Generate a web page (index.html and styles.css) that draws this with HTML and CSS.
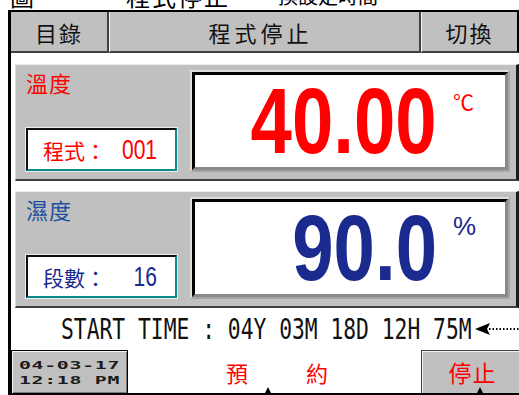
FILE: index.html
```html
<!DOCTYPE html>
<html lang="zh-Hant">
<head>
<meta charset="utf-8">
<link rel="stylesheet" href="styles.css">
</head>
<body>
<div class="caption">
  <div class="cap-line"><span class="cap1">圖</span><span class="cap2">程式停止</span><span class="cap3">換設定時間</span></div>
</div>
<div class="screen">
  <div class="header">
    <div class="hbtn b1">目錄</div>
    <div class="hbtn b2">程式停止</div>
    <div class="hbtn b3">切換</div>
  </div>
  <div class="panels">
    <div class="panel">
      <div class="side">
        <div class="label red">溫度</div>
        <div class="tag red"><span class="tag-k">程式：</span><span class="tag-v">001</span></div>
      </div>
      <div class="valbox"><div class="valinner red"><span class="num">40.00</span><span class="unit cel">℃</span></div></div>
    </div>
    <div class="panel">
      <div class="side">
        <div class="label blue">濕度</div>
        <div class="tag navy"><span class="tag-k">段數：</span><span class="tag-v">16</span></div>
      </div>
      <div class="valbox"><div class="valinner navy"><span class="num">90.0</span><span class="unit pct">%</span></div></div>
    </div>
  </div>
  <div class="start">
    <span class="start-text">START TIME : 04Y 03M 18D 12H 75M</span>
    <svg class="arrow" width="44" height="14" viewBox="0 0 44 14"><polygon points="0,7 15,1 12,7 15,13" fill="#000"/><line x1="14" y1="7" x2="44" y2="7" stroke="#000" stroke-width="2" stroke-dasharray="1.5 2"/></svg>
  </div>
  <div class="bottom">
    <div class="date"><div class="dline">04-03-17</div><div class="dline">12:18 PM</div></div>
    <div class="reserve"><span>預</span><span>約</span></div>
    <div class="stop">停止</div>
    <span class="mark m1"></span>
    <span class="mark m2"></span>
  </div>
</div>
</body>
</html>
```
FILE: styles.css
```css
html, body {
  margin: 0;
  padding: 0;
  background: #fff;
}
body {
  width: 519px;
  height: 395px;
  overflow: hidden;
  font-family: "Noto Sans CJK TC", "Liberation Sans", sans-serif;
  color: #000;
}
.caption {
  height: 10px;
  overflow: hidden;
}
.cap-line {
  display: flex;
  margin-top: -18px;
  font-size: 24px;
  line-height: 28px;
  white-space: nowrap;
}
.cap1 { margin-left: 10px; }
.cap2 { margin-left: 92px; letter-spacing: 2px; }
.cap3 { margin-left: 48px; font-size: 20px; }

.screen {
  margin-left: 8px;
  width: 511px;
  height: 385px;
  box-sizing: border-box;
  border-left: 3px solid #000;
  border-top: 2px solid #000;
  border-bottom: 2px solid #000;
  display: flex;
  flex-direction: column;
}
.header {
  display: flex;
  height: 41px;
}
.hbtn {
  box-sizing: border-box;
  height: 41px;
  background: #c0c0c0;
  border-bottom: 2px solid #404040;
  display: flex;
  align-items: center;
  justify-content: center;
  font-size: 22px;
  letter-spacing: 2px;
  color: #111;
}
.b1 { width: 98px; border-right: 2px solid #404040; }
.b2 { width: 312px; border-left: 1px solid #f4f4f4; border-right: 2px solid #404040; letter-spacing: 4px; padding-right: 8px; }
.b3 { width: 98px; border-left: 1px solid #f4f4f4; border-right: 2px solid #000; }

.panels {
  display: flex;
  flex-direction: column;
  gap: 10px;
  padding: 11px 0 0 4px;
}
.panel {
  box-sizing: border-box;
  height: 117px;
  display: flex;
  background: #c0c0c0;
  border-top: 1px solid #ececec;
  border-left: 1px solid #dcdcdc;
  border-bottom: 2px solid #404040;
  border-right: 3px solid #1a1a1a;
  padding: 5px 5px 7px 10px;
}
.side {
  width: 164px;
  display: flex;
  flex-direction: column;
  justify-content: space-between;
  padding-bottom: 1px;
}
.label {
  font-size: 22px;
  line-height: 26px;
  letter-spacing: 1px;
  margin-top: -1px;
}
.red { color: #ff0000; }
.blue { color: #1e4f9c; }
.navy { color: #1a2a8e; }
.tag {
  box-sizing: border-box;
  width: 151px;
  height: 43px;
  background: #fff;
  border: 2px solid;
  border-color: #101010 #0a8a8a #0a8a8a #101010;
  box-shadow: 0 0 0 1px #ededed;
  display: flex;
  align-items: center;
  padding: 0 18px 0 15px;
}
.tag-k {
  font-size: 21px;
  line-height: 24px;
}
.tag-v {
  margin-left: auto;
  display: inline-block;
  font-family: "Liberation Sans", sans-serif;
  font-size: 27px;
  line-height: 28px;
  transform: scaleX(0.78);
  transform-origin: right center;
}

.valbox {
  box-sizing: border-box;
  width: 320px;
  height: 102px;
  border: 2px solid;
  border-color: #dedede #a4a4a4 #a4a4a4 #dedede;
}
.valinner {
  box-sizing: border-box;
  height: 100%;
  background: #fff;
  border: 3px solid;
  border-color: #000 #8a8a8a #8a8a8a #000;
  display: flex;
  justify-content: flex-end;
  align-items: center;
  padding-right: 16px;
}
.num {
  display: inline-block;
  font-family: "Liberation Sans", sans-serif;
  font-weight: 700;
  font-size: 93px;
  line-height: 1;
  transform: scaleX(0.8);
  transform-origin: right center;
}
.unit {
  align-self: flex-start;
  width: 36px;
  padding-left: 16px;
  margin-top: 14px;
  line-height: 24px;
}
.cel {
  font-size: 21px;
}
.pct {
  font-family: "Liberation Sans", sans-serif;
  font-size: 26px;
  margin-top: 12px;
}

.start {
  height: 42px;
  display: flex;
  align-items: center;
  padding-left: 50px;
}
.start-text {
  display: inline-block;
  width: 412px;
  white-space: nowrap;
  font-family: "DejaVu Sans Mono", "Liberation Mono", monospace;
  font-size: 27.5px;
  line-height: 30px;
  color: #111;
  transform: scaleX(0.775);
  transform-origin: left center;
}
.arrow {
  margin-left: auto;
  display: block;
}

.bottom {
  position: relative;
  flex: 1;
  display: flex;
}
.date {
  box-sizing: border-box;
  width: 117px;
  background: #c0c0c0;
  border: 1px solid #000;
  border-bottom: 0;
  box-shadow: inset 1px 1px 0 #f2f2f2, inset -1px -1px 0 #7a7a7a;
  display: flex;
  flex-direction: column;
  justify-content: center;
  padding-top: 1px;
}
.dline {
  text-align: center;
  font-family: "DejaVu Sans Mono", monospace;
  font-weight: 700;
  font-size: 11px;
  line-height: 15px;
  letter-spacing: 0.4px;
  color: #1a1a1a;
  transform: scaleX(1.8);
  transform-origin: center;
}
.reserve {
  flex: 1;
  display: flex;
  justify-content: center;
  align-items: center;
  gap: 58px;
  color: #ff0000;
  font-size: 22px;
  padding-left: 5px;
}
.stop {
  box-sizing: border-box;
  width: 98px;
  background: #c0c0c0;
  border-top: 1px solid #404040;
  border-left: 1px solid #404040;
  box-shadow: inset 1px 1px 0 #f2f2f2;
  display: flex;
  align-items: center;
  justify-content: center;
  padding-left: 4px;
  color: #ff0000;
  font-size: 23px;
  letter-spacing: 1px;
}
.mark {
  position: absolute;
  top: 37px;
  width: 0;
  height: 0;
  border-left: 4px solid transparent;
  border-right: 4px solid transparent;
  border-bottom: 8px solid #000;
}
.m1 { left: 253px; }
.m2 { left: 465px; }
```
